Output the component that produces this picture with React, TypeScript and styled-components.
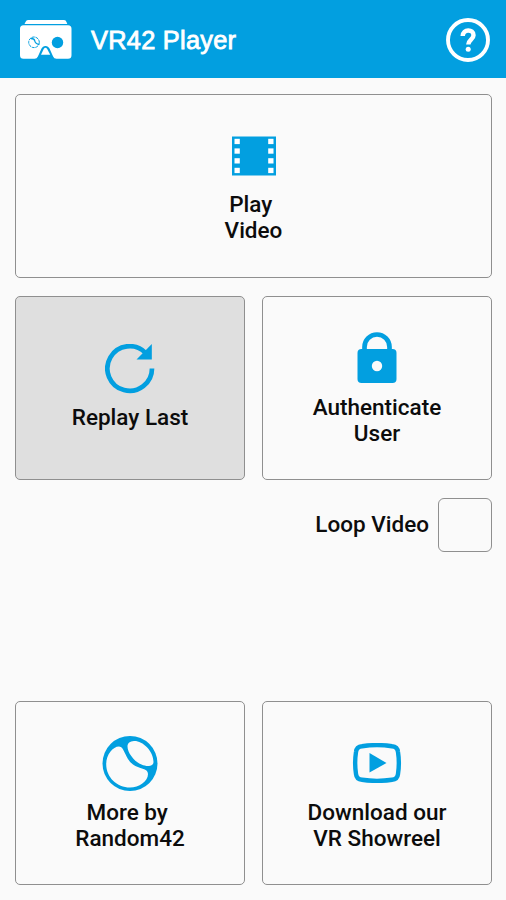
import React from "react";
import styled, { createGlobalStyle } from "styled-components";

const BLUE = "#029fe0";

const GlobalStyle = createGlobalStyle`
  * { box-sizing: border-box; }
  body { margin: 0; background: #fafafa; }
`;

const Screen = styled.div`
  width: 506px;
  height: 900px;
  display: flex;
  flex-direction: column;
  background: #fafafa;
  font-family: Roboto, sans-serif;
  color: #0c0c0c;
`;

const Header = styled.header`
  height: 78px;
  flex: none;
  display: flex;
  align-items: center;
  padding: 0 15px 0 19px;
  background: ${BLUE};
  svg { display: block; flex: none; }
`;

const HeaderLogo = styled.span`
  padding-top: 2px;
`;

const Title = styled.h1`
  flex: 1;
  margin: 2px 0 0 19px;
  font: 400 25.4px/30px "Liberation Sans", Arial, sans-serif;
  letter-spacing: 0.25px;
  color: #fff;
  -webkit-text-stroke: 0.8px #fff;
`;

const HelpButton = styled.button`
  padding: 1px 0 0;
  border: 0;
  background: none;
`;

const Main = styled.main`
  flex: 1;
  display: flex;
  flex-direction: column;
  padding: 16px 14px 15px 15px;
`;

const Row = styled.div`
  display: grid;
  grid-template-columns: 230px 230px;
  justify-content: space-between;
`;

const Card = styled.button<{ $pad: number; $pressed?: boolean }>`
  width: 100%;
  height: 184px;
  display: flex;
  flex-direction: column;
  align-items: center;
  padding: ${(p) => p.$pad}px 0 0;
  border: 1px solid #8f8f8f;
  border-radius: 5px;
  background: ${(p) => (p.$pressed ? "#dfdfdf" : "#fafafa")};
  color: inherit;
  font-family: inherit;
  svg { display: block; flex: none; }
`;

const Label = styled.span<{ $gap?: number }>`
  margin-top: ${(p) => p.$gap ?? 0}px;
  font-size: 22.5px;
  font-weight: 500;
  line-height: 26.4px;
  text-align: center;
  white-space: pre;
`;

const LoopRow = styled.label`
  display: flex;
  align-items: center;
  justify-content: flex-end;
  gap: 9px;
  margin: 18px 0 auto;
`;

const LoopLabel = styled(Label)`
  padding-bottom: 2px;
`;

const CheckBox = styled.input`
  appearance: none;
  width: 54px;
  height: 54px;
  margin: 0;
  border: 1px solid #8f8f8f;
  border-radius: 6px;
  background: #fafafa;
`;

const Gap = styled.div`
  height: 18px;
  flex: none;
`;

const HeadsetIcon = () => (
  <svg width="53" height="40" viewBox="0 0 53 40">
    <path d="M9 0h36q2 0 2.500 2l.8 2H5.500l1-2q.8-2 2.500-2z" fill="#fff" />
    <path d="M4.500 5.300h44.500q3.500 0 3.500 3.500v26.500q0 3.500-3.500 3.500H37.500q-2.500 0-3.400-2.300l-3.600-8q-1.200-2.500-3.500-2.500h-1q-2.300 0-3.500 2.500l-3.600 8q-.9 2.300-3.400 2.300H4.500q-3.500 0-3.500-3.500V8.800q0-3.500 3.500-3.500z" fill="#fff" />
    <path d="M22 34.800l2.700-5.800q1.700-2.500 3.500 0l3 5.800z" fill="#fff" />
    <circle cx="38.500" cy="22.500" r="5.700" fill={BLUE} />
    <circle cx="15" cy="22.300" r="5.300" fill="none" stroke={BLUE} strokeWidth="1" strokeDasharray="3 .7" />
    <path d="M12 18.500q3.500 0 3.800 2.500t4.500 3.500" fill="none" stroke={BLUE} strokeWidth="1.300" />
  </svg>
);

const HelpIcon = () => (
  <svg width="46" height="46" viewBox="0 0 46 46">
    <circle cx="23" cy="23" r="20" fill="none" stroke="#fff" strokeWidth="3.900" />
    <path d="M17.700 19c.2-7.300 10.800-7.200 10.800-.8 0 4.300-5.200 4.500-5.200 9.300" fill="none" stroke="#fff" strokeWidth="4.500" />
    <circle cx="23.200" cy="32.300" r="2.500" fill="#fff" />
  </svg>
);

const FilmIcon = () => (
  <svg width="44" height="40" viewBox="0 0 44 40">
    <path d="M0 .5h44v39H0z" fill={BLUE} />
    {[2.8, 12.4, 22.2, 31.8].map((y) => (
      <g key={y} fill="#fff">
        <rect x="2.500" y={y} width="5.300" height="5.300" />
        <rect x="36.200" y={y} width="5.300" height="5.300" />
      </g>
    ))}
  </svg>
);

const ReplayIcon = () => (
  <svg width="50" height="50" viewBox="0 0 50 50">
    <path d="M47 24.500A22.300 22.300 0 1 1 40.500 8.800" fill="none" stroke={BLUE} strokeWidth="4.700" />
    <path d="M46.800 0V15.500H31.500z" fill={BLUE} />
  </svg>
);

const LockIcon = () => (
  <svg width="40" height="52" viewBox="0 0 40 52">
    <path d="M7.500 20V15a12.500 12.500 0 0 1 25 0v5" fill="none" stroke={BLUE} strokeWidth="4.700" />
    <rect x=".5" y="17" width="39" height="34" rx="4" fill={BLUE} />
    <circle cx="20" cy="34" r="5.200" fill="#fafafa" />
  </svg>
);

const RandomIcon = () => (
  <svg width="56" height="56" viewBox="0 0 56 56">
    <circle cx="28" cy="27.500" r="27.500" fill={BLUE} />
    <path d="M17 10.500C11 10.500 4.200 18.500 4.200 28C4.200 41.500 15 51.500 28 51.500C37 51.500 46 45.500 46 38C46 32 37 33 31 28.500C23 22.500 22.500 10.500 17 10.500z" fill="#fafafa" />
    <path d="M32 5C40 4.500 51.500 14.500 51.500 26C51.500 30.500 45 31 39.500 28.500C32 25.500 25.500 16.500 25.500 10.500C25.500 7 28 5.200 32 5z" fill="#fafafa" />
  </svg>
);

const ShowreelIcon = () => (
  <svg width="50" height="40" viewBox="0 0 50 40">
    <path d="M10 3.200Q25 1 40 3.200Q45.500 3.700 46 9Q47.700 20 46 31Q45.500 36.300 40 36.800Q25 39 10 36.800Q4.500 36.300 4 31Q2.300 20 4 9Q4.500 3.700 10 3.200z" fill="none" stroke={BLUE} strokeWidth="4.400" />
    <path d="M17.500 10v19.500L34.500 20z" fill={BLUE} />
  </svg>
);

export default function App() {
  return (
    <Screen>
      <GlobalStyle />
      <Header>
        <HeaderLogo><HeadsetIcon /></HeaderLogo>
        <Title>VR42 Player</Title>
        <HelpButton aria-label="Help"><HelpIcon /></HelpButton>
      </Header>
      <Main>
        <Card $pad={41}>
          <FilmIcon />
          <Label $gap={15}>{"Play \nVideo"}</Label>
        </Card>
        <Gap />
        <Row>
          <Card $pad={47} $pressed>
            <ReplayIcon />
            <Label $gap={10}>Replay Last</Label>
          </Card>
          <Card $pad={35}>
            <LockIcon />
            <Label $gap={10}>{"Authenticate\nUser"}</Label>
          </Card>
        </Row>
        <LoopRow>
          <LoopLabel>Loop Video</LoopLabel>
          <CheckBox type="checkbox" />
        </LoopRow>
        <Row>
          <Card $pad={34}>
            <RandomIcon />
            <Label $gap={7}>{"More by \nRandom42"}</Label>
          </Card>
          <Card $pad={41}>
            <ShowreelIcon />
            <Label $gap={16}>{"Download our\nVR Showreel"}</Label>
          </Card>
        </Row>
      </Main>
    </Screen>
  );
}
